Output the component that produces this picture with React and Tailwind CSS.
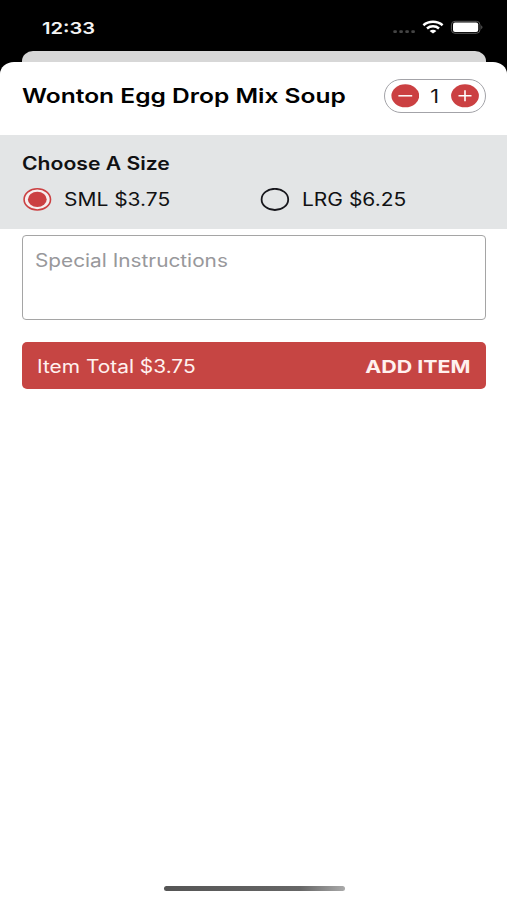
import React from "react";

function StatusBar() {
  return (
    <div className="flex h-[51px] items-start justify-between bg-black pl-[42px] pr-[23px] text-[#f4f4f4]">
      <span className="mt-[18px] inline-block origin-left scale-x-[1.22] whitespace-nowrap text-[16.5px] font-semibold leading-5">12:33</span>
      <svg className="mt-[16px]" width="91" height="24" viewBox="393 16 91 24">
        <g fill="#444">
          <rect x="393.3" y="30.3" width="3.6" height="2.8" rx="1" />
          <rect x="399.3" y="30.3" width="3.6" height="2.8" rx="1" />
          <rect x="405.3" y="30.3" width="3.6" height="2.8" rx="1" />
          <rect x="411.3" y="30.3" width="3.6" height="2.8" rx="1" />
        </g>
        <g fill="none" stroke="#fff" strokeWidth="2.5">
          <path d="M423.4 25.2C428.8 20.6 437.2 20.6 442.6 25.2" />
          <path d="M427 28.5C430.3 25.6 435.7 25.6 439 28.5" />
        </g>
        <path d="M429.6 30.9C431.4 29.4 434.6 29.4 436.4 30.9L433 33.6Z" fill="#fff" />
        <rect x="451.4" y="21.3" width="28.6" height="12" rx="3.6" fill="none" stroke="#5c5c5c" />
        <rect x="453" y="22.6" width="25.2" height="9.4" rx="2" fill="#fff" />
        <path d="M481.4 25.3Q483.4 27.3 481.4 29.3Z" fill="#707070" />
      </svg>
    </div>
  );
}

function Stepper() {
  return (
    <div className="flex h-[34px] w-[102px] items-center justify-between rounded-full border-[1.3px] border-[#a3a3a8] px-[5.5px]">
      <svg width="28" height="24" viewBox="0 0 28 24">
        <ellipse cx="14.3" cy="11.8" rx="13.9" ry="11.5" fill="#cb4042" />
        <path d="M7.4 11.8H21.2" stroke="#fff" strokeWidth="1.5" />
      </svg>
      <span className="mt-px inline-block scale-x-[1.2] text-[18px] leading-6">1</span>
      <svg width="28" height="24" viewBox="0 0 28 24">
        <ellipse cx="14" cy="11.8" rx="13.9" ry="11.5" fill="#cb4042" />
        <path d="M7.5 11.8H20.5M14 6.3V17.3" stroke="#fff" strokeWidth="1.6" />
      </svg>
    </div>
  );
}

function SizeOption({ label, selected }) {
  return (
    <label className="flex w-[238px] items-center">
      <svg width="30" height="24" viewBox="0 0 30 24">
        {selected ? (
          <>
            <ellipse cx="15.3" cy="11.4" rx="13.2" ry="10.6" fill="#f6eeee" stroke="#cb4042" strokeWidth="1.6" />
            <ellipse cx="15.3" cy="11.4" rx="9.4" ry="7.6" fill="#cb4042" />
          </>
        ) : (
          <ellipse cx="14.9" cy="11.4" rx="13.3" ry="10.6" fill="none" stroke="#17171c" strokeWidth="1.8" />
        )}
      </svg>
      <span className="ml-[11.5px] mt-px inline-block origin-left scale-x-[1.165] whitespace-nowrap text-[18px] leading-6">{label}</span>
    </label>
  );
}

export default function App() {
  return (
    <div className="flex h-[900px] w-[507px] flex-col overflow-hidden bg-white font-['Inter','Liberation_Sans',sans-serif] text-[#111113]">
      <StatusBar />
      <div className="h-[11px] shrink-0 bg-black pl-[22px] pr-[21px]">
        <div className="h-full rounded-t-[11px_10px] bg-[#d7d7d7]" />
      </div>
      <div className="shrink-0 bg-[linear-gradient(#000_12px,#fff_12px)]">
        <header className="flex h-[73px] items-start justify-between rounded-t-[14px_12px] bg-white pl-[22px] pr-[21px] pt-[17px]">
          <h1 className="mt-[5px] w-[340px] origin-left scale-x-[1.227] whitespace-nowrap text-[20px] font-semibold leading-6 text-black">Wonton Egg Drop Mix Soup</h1>
          <Stepper />
        </header>
      </div>
      <section className="h-[94px] shrink-0 bg-[#e3e5e6] pl-[22px] pt-[17px]">
        <h2 className="w-[200px] origin-left scale-x-[1.175] whitespace-nowrap text-[18px] font-semibold leading-6">Choose A Size</h2>
        <div className="mt-[11px] flex">
          <SizeOption label="SML $3.75" selected />
          <SizeOption label="LRG $6.25" />
        </div>
      </section>
      <main className="flex flex-1 flex-col px-[21.5px] pt-[5.5px]">
        <div className="h-[85.5px] rounded-[4px] border-[1.3px] border-[#a5a5a5] pl-[12px] pt-[13px] text-[18px] leading-6 text-[#98989b]">
          <span className="inline-block origin-left scale-x-[1.155] whitespace-nowrap">Special Instructions</span>
        </div>
        <button className="mt-[22px] flex h-[47px] items-center justify-between rounded-[5px] bg-[#c64543] pl-[15.5px] pr-[15.5px] pt-[2px] text-[18px] leading-6 text-[#fff1ef]">
          <span className="inline-block origin-left scale-x-[1.16] whitespace-nowrap">Item Total $3.75</span>
          <span className="inline-block origin-right scale-x-[1.19] whitespace-nowrap font-bold">ADD ITEM</span>
        </button>
        <div className="mb-[9px] ml-[142px] mt-auto h-[5px] w-[181px] rounded-full bg-[linear-gradient(90deg,#555,#666_75%,#aaa)]" />
      </main>
    </div>
  );
}
